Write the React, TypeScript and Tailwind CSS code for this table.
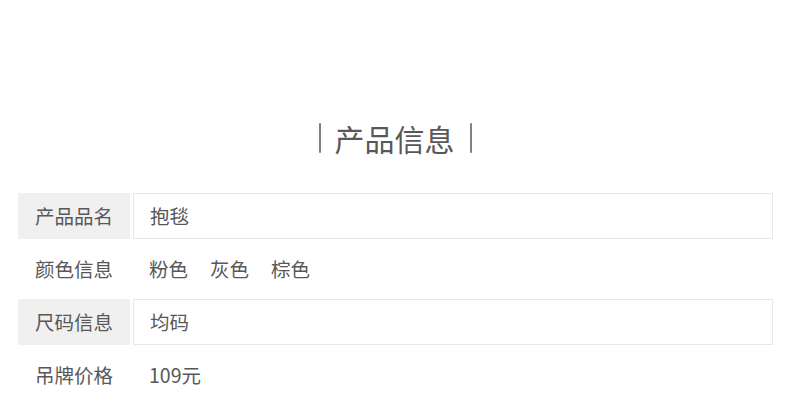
const rows = [
  { label: '产品品名', value: ['抱毯'], boxed: true },
  { label: '颜色信息', value: ['粉色', '灰色', '棕色'], boxed: false },
  { label: '尺码信息', value: ['均码'], boxed: true },
  { label: '吊牌价格', value: ['109元'], boxed: false },
]

const App = () => {
  return (
    <div
      className="w-[790px] h-[405px] overflow-hidden bg-white text-[#585858]"
      style={{ fontFamily: '"Microsoft YaHei", "Noto Sans CJK SC", sans-serif' }}
    >
      <div className="pt-[117px] flex justify-center items-center h-[158px] text-[30px] leading-none text-[#585858]">
        <span className="w-[2px] h-[30px] bg-[#808080] rounded-full mr-[14px]" />
        <span>产品信息</span>
        <span className="w-[2px] h-[30px] bg-[#808080] rounded-full ml-[15px]" />
      </div>

      <div className="mt-[35px] ml-[18px] w-[755px] flex flex-col gap-[7px]">
        {rows.map((row) => (
          <div key={row.label} className="flex h-[46px] gap-[3px]">
            <div
              className={
                'w-[112px] flex items-center justify-center text-[19.5px] ' +
                (row.boxed ? 'bg-[#f0f0f0]' : '')
              }
            >
              {row.label}
            </div>
            <div
              className={
                'flex-1 flex items-center pl-[16px] gap-[22px] text-[19.5px] ' +
                (row.boxed ? 'border border-[#e8e8e8]' : '')
              }
            >
              {row.value.map((v) => (
                <span key={v}>{v}</span>
              ))}
            </div>
          </div>
        ))}
      </div>
    </div>
  )
}

export default App
